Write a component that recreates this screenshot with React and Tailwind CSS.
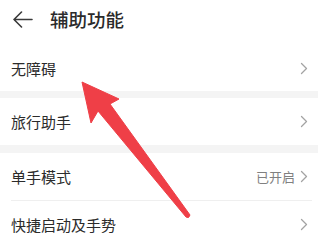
import React from "react";

const font = { fontFamily: '"Noto Sans CJK SC", "Noto Sans", sans-serif' };

const Chevron = () => (
    <svg width="8" height="13" viewBox="0 0 8 13" className="shrink-0">
        <polyline points="1.5,1.5 6.5,6.5 1.5,11.5" fill="none" stroke="#a3a3a3" strokeWidth="1.3" strokeLinecap="round" strokeLinejoin="round" />
    </svg>
);

const Row = ({ label, value, className }) => (
    <div className={"flex items-center justify-between pl-[11px] pr-[12px] " + className}>
        <span className="text-[15px] leading-none text-[#2b2b2b]">{label}</span>
        <div className="flex items-center gap-[5px]">
            {value && <span className="text-[13px] leading-none text-[#808080]">{value}</span>}
            <Chevron />
        </div>
    </div>
);

export default function App() {
    return (
        <div className="relative w-[320px] h-[240px] overflow-hidden bg-white" style={font}>
            {/* header */}
            <div className="flex items-center h-[38px] pl-[13px]">
                <svg width="20" height="17" viewBox="0 0 20 17">
                    <path d="M1 8.5H19M8.5 1L1 8.5L8.5 16" fill="none" stroke="#3a3a3a" strokeWidth="1.6" strokeLinecap="round" strokeLinejoin="round" />
                </svg>
                <span className="ml-[17px] text-[18.5px] font-medium leading-none text-[#2b2b2b]">辅助功能</span>
            </div>

            <Row label="无障碍" className="h-[53px] pt-[7px]" />
            <div className="h-[7px] bg-[#f4f4f4] mr-[2px]" />
            <Row label="旅行助手" className="h-[47px]" />
            <div className="h-[8px] bg-[#f4f4f4] mr-[2px]" />
            <Row label="单手模式" value="已开启" className="h-[47px]" />
            <div className="h-px bg-[#efefef] ml-[11px] mr-[8px]" />
            <Row label="快捷启动及手势" className="h-[46px]" />

            {/* red annotation arrow */}
            <svg className="absolute left-0 top-0" width="320" height="240" viewBox="0 0 320 240">
                <path
                    d="M82 82 L119 99 L110 104 L190 215 Q189 219 186 217 L98 111 L91 123 Z"
                    fill="#ef3f47"
                    strokeLinejoin="round"
                    stroke="#ef3f47"
                    strokeWidth="1"
                />
            </svg>
        </div>
    );
}
